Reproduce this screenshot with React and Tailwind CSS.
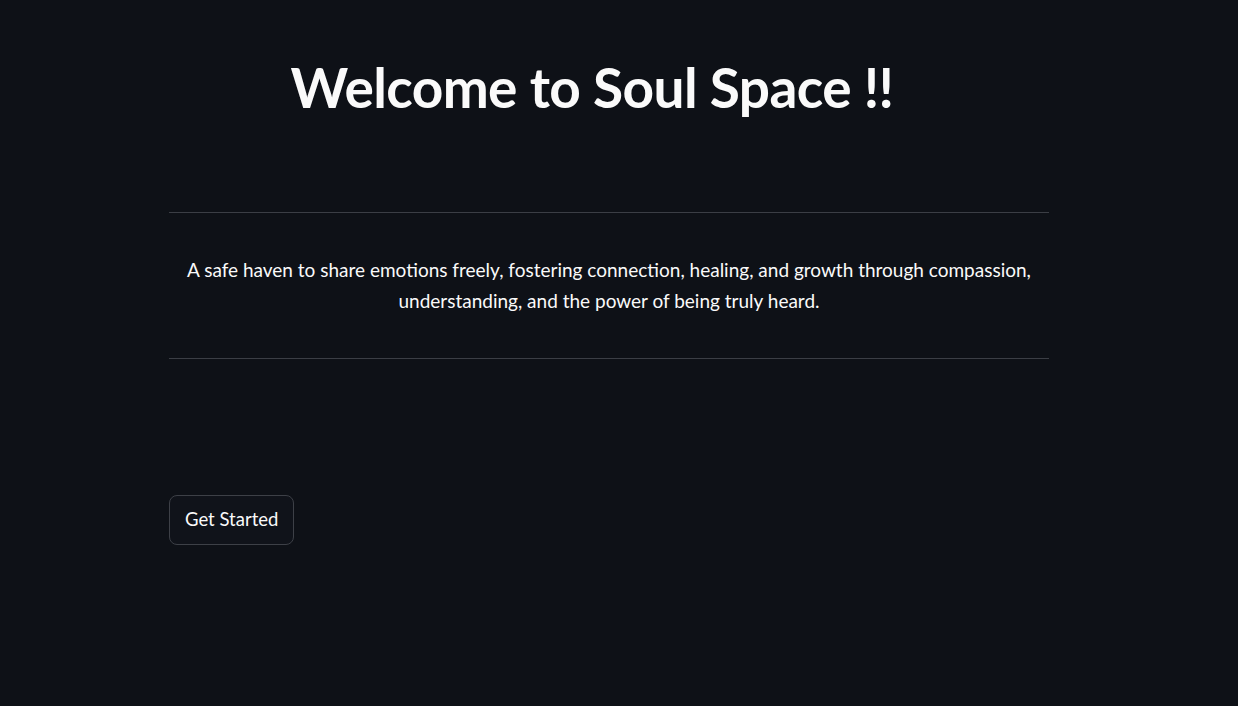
import React from 'react';

const App = () => {
  return (
    <div className="min-h-[706px] w-full bg-[#0e1117] text-[#fafafa] font-['Lato','Noto_Sans',sans-serif]">
      <div className="ml-[169px] w-[880px] pt-[52px]">
        {/* Title */}
        <h1 className="pr-[34px] text-center text-[55px] font-bold leading-[70px] tracking-[-0.6px]">
          Welcome to Soul Space !!
        </h1>

        <hr className="mt-[90px] border-0 border-t border-[#3b3e45]" />

        {/* Tagline */}
        <p className="px-4 pt-[41px] pb-[42px] text-center text-[19px] leading-[31px]">
          A safe haven to share emotions freely, fostering connection, healing, and growth through compassion,
          understanding, and the power of being truly heard.
        </p>

        <hr className="border-0 border-t border-[#3b3e45]" />

        <div className="pt-[136px]">
          <button className="h-[50px] rounded-lg border border-[#3d4047] bg-[#10131a] px-[15px] text-[18.5px] text-[#fafafa]">
            Get Started
          </button>
        </div>
      </div>
    </div>
  );
};

export default App;
